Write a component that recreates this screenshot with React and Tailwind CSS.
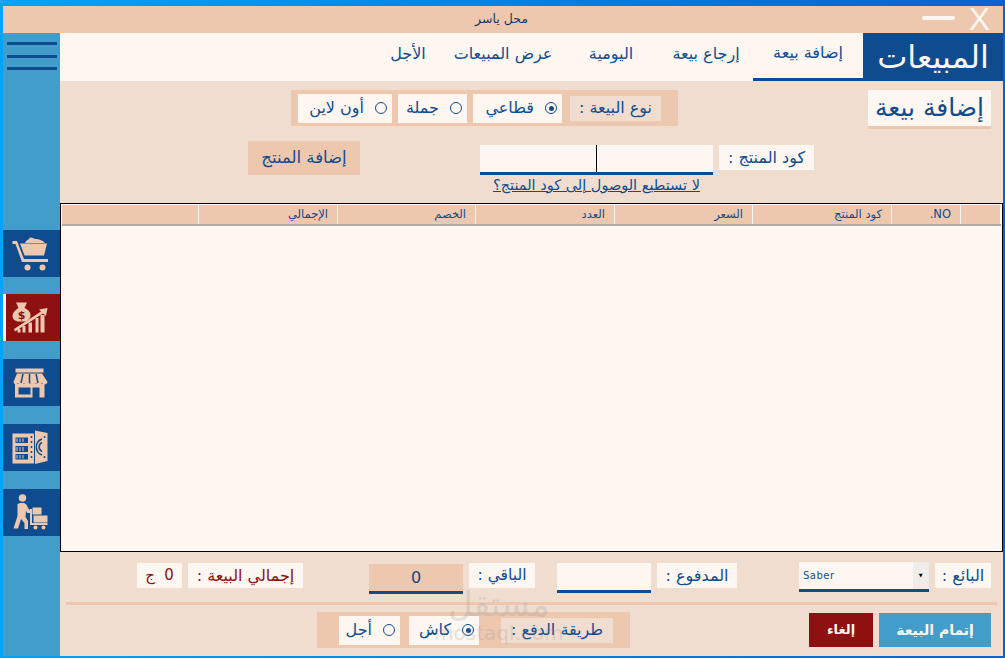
import React from 'react';

const ar = { fontFamily: '"DejaVu Sans", "Liberation Sans", sans-serif' };

const Radio = ({ checked }) => (
    <span className="flex h-[12px] w-[12px] shrink-0 items-center justify-center rounded-full border border-[#0f4c8f] bg-[#fef6f0]">
        {checked && <span className="h-[5px] w-[5px] rounded-full bg-[#0f4c8f]" />}
    </span>
);

const RadioBox = ({ label, checked, w }) => (
    <div dir="rtl" className={`flex h-[29px] items-center gap-[11px] whitespace-nowrap bg-[#fef6f0] pr-[5px] text-[16px] text-[#0f4c8f] ${w}`}>
        <Radio checked={checked} />
        <span>{label}</span>
    </div>
);

const Label = ({ children, w, red }) => (
    <div dir="rtl" className={`flex h-[25px] items-center justify-center whitespace-nowrap bg-[#fef6f0] text-[16px] ${red ? 'text-[#8f1010]' : 'text-[#0f4c8f]'} ${w}`}>
        {children}
    </div>
);

const CartIcon = () => (
    <svg width="40" height="40" viewBox="0 0 40 40" fill="#edc7ae">
        <path d="M0.5 7H5L12 25H36V28H10L3.5 10H0.5Z" />
        <path d="M8 9.5H35L32 21.5H12.5Z" />
        <path d="M13 9C14 6 17 6 18 3.5C20 3 22 5 24 5C27 5 30 6 33 9Z" />
        <circle cx="15.5" cy="33.5" r="3" />
        <circle cx="30.5" cy="33.5" r="3" />
    </svg>
);

const MoneyIcon = () => (
    <svg width="40" height="40" viewBox="0 0 40 40" fill="#edc7ae">
        <path d="M4 4.5H15L12.5 10C17 12 19 15 18.5 18C18 21.5 15 23.5 12 23.5H7C3 23.5 0.5 21 0.5 18C0.5 15 3 12 6.5 10Z" />
        <text x="9.5" y="21" fontSize="11" fontWeight="bold" fill="#8f1010" textAnchor="middle">$</text>
        <path d="M2 31L29 13.5L27 11.5L35.5 10L34 18L31 15.5L3 33.5Z" />
        <path d="M5.5 31H8.5V34.5H5.5ZM10.5 28H13.5V34.5H10.5ZM16.5 24.5H20V34.5H16.5ZM23.5 20H26.5V34.5H23.5ZM28.5 17H32.5V34.5H28.5Z" />
    </svg>
);

const StoreIcon = () => (
    <svg width="40" height="40" viewBox="0 0 40 40" fill="#edc7ae">
        <path d="M3.5 5.5H31.5V9.5H3.5Z" />
        <path d="M5 10.5H30L35.5 19C35 22 31 22 30 20C29 22 25 22 24 20C23 22 19 22 18 20C17 22 13 22 12 20C11 22 7 22 6 20C5 22 2 22 1.5 19Z" />
        <path d="M11 11L9 20M17.5 11V20M24 11L26 20" stroke="#0f4c8f" strokeWidth="1.5" />
        <path fillRule="evenodd" d="M3 21H32.5V34.5H27.5V24.5H20.5V34.5H3ZM6.5 24.5V31.5H18.5V24.5Z" />
    </svg>
);

const SafeIcon = () => (
    <svg width="40" height="40" viewBox="0 0 40 40" fill="#edc7ae">
        <path fillRule="evenodd" d="M0.5 5.5H22V35.5H0.5ZM3.5 9.5V15H16V9.5ZM3.5 18V24H16V18ZM3.5 26V31.5H16V26Z" />
        <path d="M5 10.5V14M8 10.5V14M11 10.5V14M5 19V23M8 19V23M11 19V23M5 27V30.5M8 27V30.5M11 27V30.5" stroke="#edc7ae" strokeWidth="1" />
        <path d="M19.5 8V33" stroke="#0f4c8f" strokeWidth="1.5" strokeDasharray="2 3" />
        <path d="M23 2.5L35.5 5V33L23 36Z" />
        <path d="M30 11A8.5 8.5 0 0 0 30 27M30 14.5A5 5 0 0 0 30 23.5" fill="none" stroke="#0f4c8f" strokeWidth="1.5" />
        <circle cx="32.5" cy="9" r="1" fill="#0f4c8f" />
        <circle cx="32.5" cy="29" r="1" fill="#0f4c8f" />
    </svg>
);

const WorkerIcon = () => (
    <svg width="40" height="40" viewBox="0 0 40 40" fill="#edc7ae">
        <circle cx="10.5" cy="5" r="3.7" />
        <path d="M5.5 11C7 9.5 13 9.5 14 11L17 16.5L19 17V20L15 20L14 17.5L13.5 24L16 28V36H12.5V30L9 26L6 35.5H1.5L5.5 23Z" />
        <path d="M20.5 14.5H29.5V21.5H20.5ZM21.5 22.5H35.5V29.5H21.5Z" />
        <path d="M18 16H20V30H35.5V32H18Z" />
        <circle cx="23.5" cy="34.5" r="2" />
        <circle cx="31.5" cy="34.5" r="2" />
    </svg>
);

const NavItem = ({ children, active }) => (
    <div className={`flex h-[47px] w-[57px] items-center justify-center ${active ? '-mt-px border-l-[3px] border-[#fef6f0] bg-[#8f1010] pr-[3px]' : 'bg-[#0f4c8f]'}`}>
        {children}
    </div>
);

const Tab = ({ label, w, active }) => (
    <div dir="rtl" className={`flex h-full items-center justify-center pb-[6px] text-[16px] text-[#0f4c8f] ${w} ${active ? 'border-b-[3px] border-[#0f4c8f]' : ''}`}>
        {label}
    </div>
);

const columns = [
    { label: '', w: 'w-[137px]' },
    { label: 'الإجمالي', w: 'w-[139px]' },
    { label: 'الخصم', w: 'w-[138px]' },
    { label: 'العدد', w: 'w-[139px]' },
    { label: 'السعر', w: 'w-[138px]' },
    { label: 'كود المنتج', w: 'w-[139px]' },
    { label: 'NO.', w: 'w-[69px]' },
    { label: '', w: 'flex-1' },
];

export default function App() {
    return (
        <div style={ar} className="flex h-[658px] w-[1005px] flex-col overflow-hidden bg-gradient-to-r from-[#00a4fb] to-[#0a62d2] pt-[6px] pb-[2px] pl-[3px] pr-[2px]">
            {/* title bar */}
            <div className="relative flex h-[27px] shrink-0 items-center justify-center bg-[#edc7ae] pr-[3px] text-[12.5px] text-[#0f3a6b]">
                <span dir="rtl">محل ياسر</span>
                <div className="absolute right-[48px] top-[10px] h-[4px] w-[33px] rounded-full bg-[#fef6f0]" />
                <div className="absolute right-[13px] top-0 text-[32px] leading-[27px] text-[#fef6f0]" style={{ fontFamily: '"Liberation Sans", sans-serif' }}>X</div>
            </div>

            <div className="flex min-h-0 flex-1">
                {/* sidebar */}
                <div className="flex w-[57px] shrink-0 flex-col bg-[#429dcb]">
                    <div className="flex flex-col gap-[9.5px] pl-[4px] pr-[3px] pt-[9px]">
                        <div className="h-[3px] bg-[#0f4c8f]" />
                        <div className="h-[3px] bg-[#0f4c8f]" />
                        <div className="h-[3px] bg-[#0f4c8f]" />
                    </div>
                    <div className="mt-[160px] flex flex-col gap-[18px]">
                        <NavItem><CartIcon /></NavItem>
                        <NavItem active><MoneyIcon /></NavItem>
                        <NavItem><StoreIcon /></NavItem>
                        <NavItem><SafeIcon /></NavItem>
                        <NavItem><WorkerIcon /></NavItem>
                    </div>
                </div>

                {/* main */}
                <div className="flex min-w-0 flex-1 flex-col bg-[#f0ddcf]">
                    <div className="flex h-[48px] shrink-0 items-stretch bg-[#fef6f0]">
                        <div className="w-[313px]" />
                        <Tab label="الأجل" w="w-[70px]" />
                        <Tab label="عرض المبيعات" w="w-[120px]" />
                        <Tab label="اليومية" w="w-[96px]" />
                        <Tab label="إرجاع بيعة" w="w-[94px]" />
                        <Tab label="إضافة بيعة" w="w-[110px]" active />
                        <div dir="rtl" className="flex w-[140px] items-center justify-center bg-[#0f4c8f] text-[32px] leading-none text-[#fef6f0]">المبيعات</div>
                    </div>

                    {/* sale type */}
                    <div className="mt-[9px] flex shrink-0 items-start">
                        <div className="ml-[231px] flex h-[36px] w-[387px] items-center gap-[6px] bg-[#edc7ae] px-[7px]">
                            <RadioBox label="أون لاين" w="w-[94px]" />
                            <RadioBox label="جملة" w="w-[69px]" />
                            <RadioBox label="قطاعي" w="w-[89px]" checked />
                            <div dir="rtl" className="ml-[2px] flex h-[25px] w-[91px] items-center justify-center whitespace-nowrap bg-[#f0ddcf] text-[16px] text-[#0f4c8f]">نوع البيعة :</div>
                        </div>
                        <div dir="rtl" className="ml-[190px] flex h-[39px] w-[123px] items-center justify-center border-b-[3px] border-[#edc7ae] bg-[#fef6f0] text-[25px] text-[#0f4c8f]">إضافة بيعة</div>
                    </div>

                    {/* product code */}
                    <div className="mt-[12px] flex shrink-0 items-start">
                        <button dir="rtl" className="ml-[188px] flex h-[34px] w-[112px] items-center justify-center bg-[#edc7ae] text-[16.5px] text-[#0f4c8f]">إضافة المنتج</button>
                        <div className="ml-[120px] mt-[4px] flex w-[233px] flex-col">
                            <div className="flex h-[30px] justify-center border-b-[3px] border-[#0f4c8f] bg-[#fef6f0]">
                                <div className="h-full w-px bg-black" />
                            </div>
                            <div dir="rtl" className="mt-[2px] whitespace-nowrap text-center text-[14.5px] leading-[16px] text-[#0f4c8f] underline">لا تستطيع الوصول إلى كود المنتج؟</div>
                        </div>
                        <div className="ml-[6px] mt-[4px]"><Label w="w-[95px]">كود المنتج :</Label></div>
                    </div>

                    {/* table */}
                    <div className="mt-[10px] flex h-[349px] shrink-0 flex-col border border-black bg-[#fef6f0] p-px">
                        <div className="flex h-[21px] shrink-0 border-b-2 border-b-[#b0a8a2] bg-[#edc7ae] text-[11.5px] text-[#0f4c8f]">
                            {columns.map((col, i) => (
                                <div key={i} dir="rtl" className={`flex items-center border-r border-[#fef6f0] pr-[9px] ${col.w}`}>{col.label}</div>
                            ))}
                        </div>
                    </div>

                    {/* totals */}
                    <div className="mt-[11px] flex shrink-0 items-start">
                        <div className="ml-[77px]"><Label w="w-[45px]" red><span className="text-[15px]">0&nbsp;&nbsp;ج</span></Label></div>
                        <div className="ml-[6px]"><Label w="w-[115px]" red><span className="text-[16px]">إجمالي البيعة :</span></Label></div>
                        <div className="ml-[66px] mt-px flex h-[30px] w-[94px] items-center justify-center border-b-[3px] border-[#0f4c8f] bg-[#edc7ae] text-[16px] text-[#0f4c8f]">0</div>
                        <div className="ml-[6px]"><Label w="w-[66px]"><span className="text-[15.5px]">الباقي :</span></Label></div>
                        <div className="ml-[22px] h-[30px] w-[94px] border-b-[3px] border-[#0f4c8f] bg-[#fef6f0]" />
                        <div className="ml-[6px]"><Label w="w-[80px]">المدفوع :</Label></div>
                        <div className="ml-[62px] -mt-px flex h-[30px] w-[130px] items-center justify-between border-b-[3px] border-[#0f4c8f] bg-[#fef6f0] pl-[4px] text-[10px] tracking-[0.5px] text-[#0f4c8f]">
                            <span>Saber</span>
                            <span className="flex h-full w-[16px] items-center justify-center bg-[#f0ede8] text-[5px] text-black">▼</span>
                        </div>
                        <div className="ml-[6px]"><Label w="w-[56px]">البائع :</Label></div>
                    </div>

                    <div className="mx-[6px] mt-[8px] h-[3px] shrink-0 bg-[#edc7ae]" />

                    {/* payment */}
                    <div className="relative mt-[7px] flex shrink-0 items-start">
                        <div className="ml-[257px] flex h-[36px] w-[313px] items-center gap-[9px] bg-[#edc7ae] pl-[22px]">
                            <RadioBox label="أجل" w="w-[61px]" />
                            <RadioBox label="كاش" w="w-[70px]" checked />
                            <div dir="rtl" className="ml-[13px] flex h-[25px] w-[112px] items-center justify-center whitespace-nowrap bg-[#f0ddcf] text-[16px] text-[#0f4c8f]">طريقة الدفع :</div>
                        </div>
                        <button dir="rtl" className="ml-[179px] mt-px flex h-[34px] w-[64px] items-center justify-center bg-[#8f1010] text-[13px] font-bold text-[#fef6f0]">إلغاء</button>
                        <button dir="rtl" className="ml-[6px] mt-px flex h-[34px] w-[112px] items-center justify-center bg-[#429dcb] text-[14px] font-bold text-[#fef6f0]">إتمام البيعة</button>
                        {/* watermark */}
                        <div className="pointer-events-none absolute left-[374px] top-[-26px] flex flex-col items-center text-[#8a8f94] opacity-20">
                            <span dir="rtl" className="text-[34px] leading-[36px]">مستقل</span>
                            <span className="text-[20px] leading-[22px]">mostaql.com</span>
                        </div>
                    </div>
                </div>
            </div>
        </div>
    );
}
